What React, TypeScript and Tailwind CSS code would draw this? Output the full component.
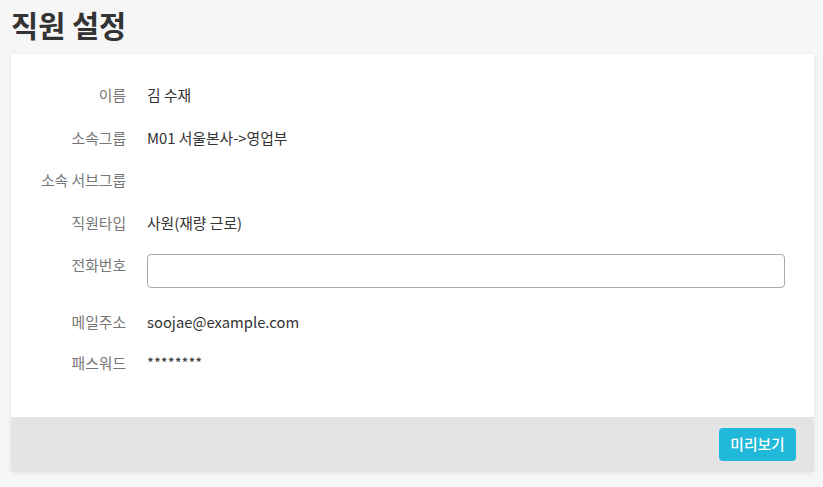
import React from "react";

const font = { fontFamily: '"Noto Sans CJK KR", "Noto Sans", sans-serif' };

function Row({ label, children, className = "" }: { label: string; children?: React.ReactNode; className?: string }) {
  return (
    <div className={`flex items-start ${className}`}>
      <div className="w-[115px] shrink-0 text-right text-[14.8px] leading-5 text-[#777]">{label}</div>
      <div className="ml-[21px] flex-1 text-[14.8px] leading-5 text-[#333]">{children}</div>
    </div>
  );
}

export default function App() {
  return (
    <div className="min-h-[487px] w-full bg-[#f6f6f6] pt-[6px]" style={font}>
      <h1 className="pl-[11px] text-[29.5px] font-bold leading-[36px] text-[#333]">직원 설정</h1>
      <div className="mx-[11px] mt-[12px] w-[803px] overflow-hidden rounded-[3px] bg-white shadow-[0_1px_4px_rgba(0,0,0,0.08)]">
        <div className="flex flex-col pt-[31px] pb-[44px] pr-[29px]">
          <Row label="이름">김 수재</Row>
          <Row label="소속그룹" className="mt-[23px]">M01 서울본사-&gt;영업부</Row>
          <Row label="소속 서브그룹" className="mt-[22px]"></Row>
          <Row label="직원타입" className="mt-[23px]">사원(재량 근로)</Row>
          <div className="mt-[21px] flex items-start">
            <div className="w-[115px] shrink-0 pt-[1px] text-right text-[14.8px] leading-5 text-[#777]">전화번호</div>
            <input
              type="text"
              className="ml-[21px] h-[34px] flex-1 rounded-[4px] border border-[#aaa] bg-white px-3 text-[14px] outline-none"
            />
          </div>
          <Row label="메일주소" className="mt-[24px]">soojae@example.com</Row>
          <Row label="패스워드" className="mt-[21px]">********</Row>
        </div>
        <div className="flex h-[55px] items-start justify-end bg-[#e4e4e4] pr-[18px] pt-[11px]">
          <button className="h-[33px] w-[77px] rounded-[4px] bg-[#20b9d9] text-[14.8px] font-medium text-white">미리보기</button>
        </div>
      </div>
    </div>
  );
}
